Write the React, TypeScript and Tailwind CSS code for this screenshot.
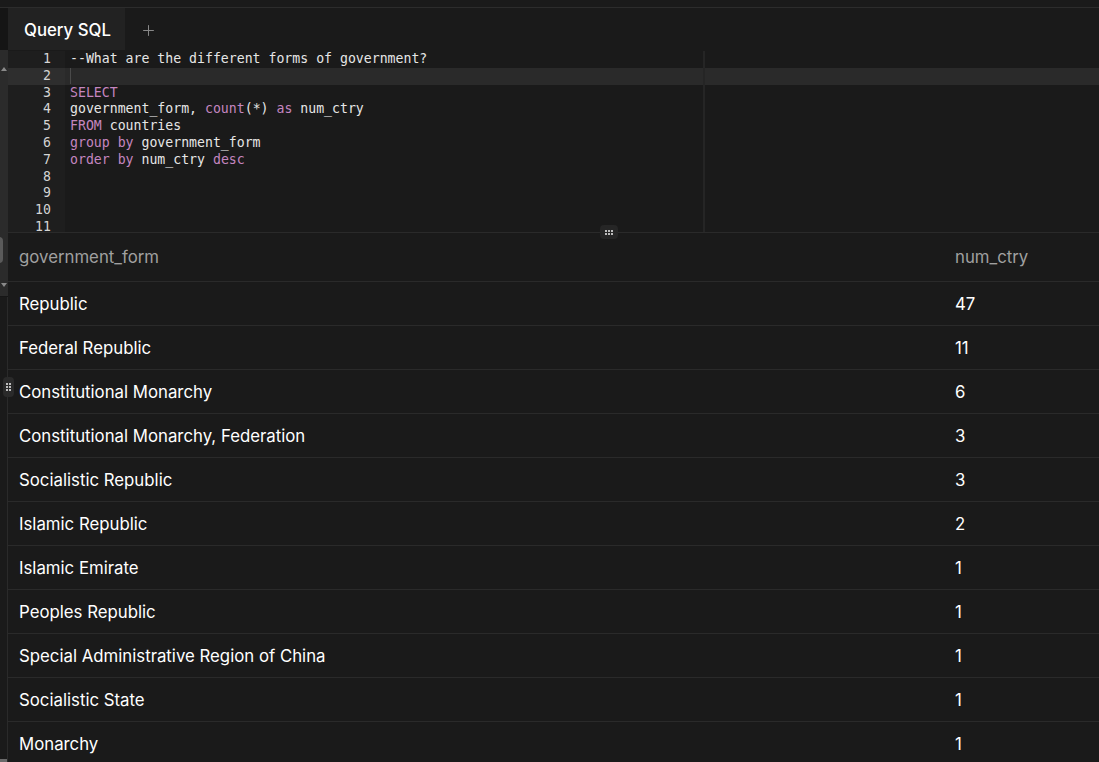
import React from "react";
import { Plus } from "lucide-react";

const K = ({ children }: { children: React.ReactNode }) => (
  <span className="text-[#c586c0]">{children}</span>
);

const codeLines: React.ReactNode[] = [
  <>--What are the different forms of government?</>,
  <></>,
  <K>SELECT</K>,
  <>
    government_form, <K>count</K>(*) <K>as</K> num_ctry
  </>,
  <>
    <K>FROM</K> countries
  </>,
  <>
    <K>group by</K> government_form
  </>,
  <>
    <K>order by</K> num_ctry <K>desc</K>
  </>,
  <></>,
  <></>,
  <></>,
  <></>,
];

const rows: [string, string][] = [
  ["Republic", "47"],
  ["Federal Republic", "11"],
  ["Constitutional Monarchy", "6"],
  ["Constitutional Monarchy, Federation", "3"],
  ["Socialistic Republic", "3"],
  ["Islamic Republic", "2"],
  ["Islamic Emirate", "1"],
  ["Peoples Republic", "1"],
  ["Special Administrative Region of China", "1"],
  ["Socialistic State", "1"],
  ["Monarchy", "1"],
];

function DotGrid({ cols, rows: r }: { cols: number; rows: number }) {
  const dots = [];
  for (let y = 0; y < r; y++)
    for (let x = 0; x < cols; x++)
      dots.push(<rect key={`${x}-${y}`} x={x * 3} y={y * 3} width="2" height="2" fill="#bdbdbd" />);
  return (
    <svg width={cols * 3 - 1} height={r * 3 - 1}>
      {dots}
    </svg>
  );
}

const mono = { fontFamily: "'DejaVu Sans Mono', 'Liberation Mono', monospace" };

export default function App() {
  return (
    <div
      className="relative w-[1099px] h-[762px] overflow-hidden bg-[#1a1a1a] flex flex-col text-white"
      style={{ fontFamily: "Inter, 'Noto Sans', sans-serif" }}
    >
      {/* top strip */}
      <div className="h-[8px] shrink-0 border-b border-[#2c2c2c] bg-[#1a1a1a]" />

      {/* tab bar */}
      <div className="h-[42px] shrink-0 flex bg-[#1a1a1a]">
        <div className="w-[8px] bg-[#151515]" />
        <div className="w-[117px] bg-[#222222] flex items-center pl-[16px] pt-[3px] text-[16.8px] font-medium text-white">
          Query SQL
        </div>
        <div className="w-[46px] flex items-center justify-center pt-[3px] text-[#8a8a8a]">
          <Plus size={17} strokeWidth={1.4} />
        </div>
        <div className="flex-1" />
      </div>

      {/* main */}
      <div className="flex-1 flex min-h-0">
        {/* left rail */}
        <div className="w-[8px] shrink-0 flex flex-col">
          <div className="h-[247px] bg-[#2b2b2b] border-b border-[#161616] relative">
            <div className="absolute left-[1px] top-[17px] w-0 h-0 border-l-[3px] border-r-[3px] border-b-[4px] border-l-transparent border-r-transparent border-b-[#8a8a8a]" />
            <div className="absolute left-[-6px] top-[187px] w-[9px] h-[26px] rounded-[4px] bg-[#5a5a5a]" />
            <div className="absolute left-[1px] top-[233px] w-0 h-0 border-l-[3px] border-r-[3px] border-t-[4px] border-l-transparent border-r-transparent border-t-[#8a8a8a]" />
          </div>
          <div className="flex-1 border-r border-[#2a2a2a] bg-[#1a1a1a]" />
        </div>

        {/* content */}
        <div className="flex-1 flex flex-col min-w-0">
          {/* editor */}
          <div className="h-[182px] shrink-0 flex overflow-hidden relative pt-[1px]">
            <div className="w-[57px] shrink-0 bg-[#1e1e1e] text-[13.2px] text-[#d4d4d4] text-right" style={mono}>
              {codeLines.map((_, i) => (
                <div
                  key={i}
                  className={`h-[16.8px] leading-[16.8px] pr-[14px] ${i === 1 ? "bg-[#2e2e2e]" : ""}`}
                >
                  {i + 1}
                </div>
              ))}
            </div>
            <div className="flex-1 text-[13.2px] text-[#e6e6e6] relative" style={mono}>
              {codeLines.map((c, i) => (
                <div
                  key={i}
                  className={`h-[16.8px] leading-[16.8px] pl-[5px] whitespace-pre ${i === 1 ? "bg-[#2a2a2a]" : ""}`}
                >
                  {i === 1 ? <span className="inline-block w-[1px] h-[16px] align-middle bg-[#4a4a4a]" /> : c}
                </div>
              ))}
              <div className="absolute left-[638px] top-0 bottom-0 w-[2px] bg-[#252525]" />
            </div>
          </div>

          {/* divider */}
          <div className="h-[1px] shrink-0 bg-[#2a2a2a] relative">
            <div className="absolute left-[592px] top-[-7px] w-[18px] h-[14px] rounded-[4px] bg-[#262626] flex items-center justify-center">
              <DotGrid cols={3} rows={2} />
            </div>
          </div>

          {/* table */}
          <div className="flex-1 min-h-0 overflow-hidden">
            <div className="h-[49px] flex items-center pt-[2px] border-b border-[#2a2a2a] text-[16.8px] text-[#a0a0a0]">
              <div className="w-[936px] pl-[11px]">government_form</div>
              <div className="flex-1 pl-[11px]">num_ctry</div>
            </div>
            {rows.map(([a, b], i) => (
              <div
                key={i}
                className="h-[44px] shrink-0 flex items-center pt-[2px] border-b border-[#2a2a2a] text-[16.8px] text-white"
              >
                <div className="w-[936px] pl-[11px]">{a}</div>
                <div className="flex-1 pl-[11px]">{b}</div>
              </div>
            ))}
          </div>
        </div>
      </div>

      {/* floating row drag handle */}
      <div className="absolute left-[3px] top-[377px] w-[11px] h-[20px] rounded-[4px] bg-[#2a2a2a] flex items-center justify-center">
        <DotGrid cols={2} rows={3} />
      </div>
      <div className="absolute left-0 top-[759px] w-[7px] h-[3px] bg-[#6a6a6a]" />
    </div>
  );
}
